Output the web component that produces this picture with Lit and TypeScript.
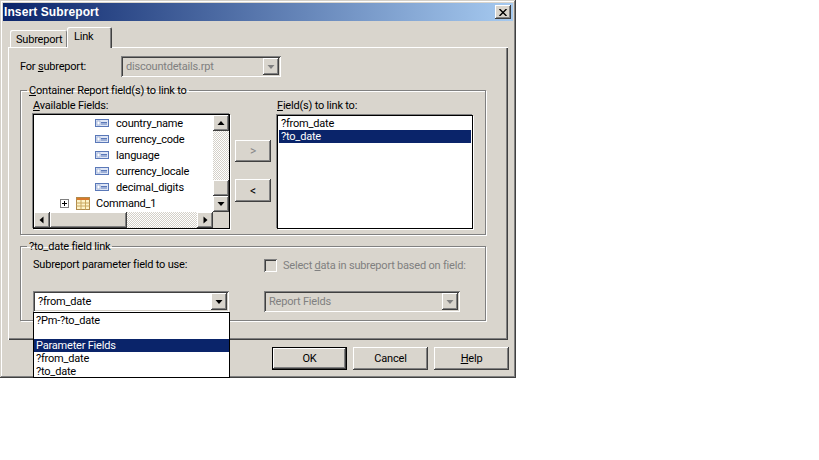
import { LitElement, html, css, svg } from "lit";
import { customElement } from "lit/decorators.js";

const fieldIcon = html`<svg class="ficon" width="14" height="8" viewBox="0 0 14 8"><rect x="0.5" y="0.5" width="13" height="7" fill="#dfe6f5" stroke="#5a78b8"/><rect x="2" y="2" width="3" height="4" fill="#fff" stroke="#7f96c8" stroke-width="0.6"/><path d="M6 3.5H12M6 5H12" stroke="#5a78b8"/></svg>`;
const tableIcon = html`<svg class="ticon" width="14" height="13" viewBox="0 0 14 13"><rect x="0.5" y="0.5" width="13" height="12" fill="#fdf3c8" stroke="#b08a4a"/><rect x="1" y="1" width="12" height="2" fill="#d9792b"/><path d="M0.5 6H13.5M0.5 9H13.5M5 3V12.5M9.5 3V12.5" stroke="#c9a860"/></svg>`;
const plusBox = html`<svg class="plus" width="9" height="9" viewBox="0 0 9 9"><rect x="0.5" y="0.5" width="8" height="8" fill="#fff" stroke="#808080"/><path d="M2 4.5H7M4.5 2V7" stroke="#000"/></svg>`;
const arrow = (d: string, color = "#000") => html`<svg width="8" height="8" viewBox="0 0 8 8">${svg`<path d=${d} fill=${color}/>`}</svg>`;
const DOWN = "M0.5 2H7.5L4 6Z";
const UP = "M0.5 6H7.5L4 2Z";
const LEFT = "M5.5 0.5V7.5L1.5 4Z";
const RIGHT = "M2.5 0.5V7.5L6.5 4Z";

@customElement("app-root")
export class AppRoot extends LitElement {
  static styles = css`
    :host { display: block; width: 819px; height: 460px; background: #fff; overflow: hidden;
      font: 11px Roboto, "Liberation Sans", Arial, sans-serif; letter-spacing: -0.2px; color: #000; white-space: nowrap; }
    .win { box-sizing: border-box; width: 516px; height: 378px; background: #d9d5cd; padding: 3px;
      box-shadow: inset -1px -1px #404040, inset 1px 1px #d4d0c8, inset -2px -2px #808080, inset 2px 2px #fff; }
    .title { height: 18px; display: flex; align-items: center; justify-content: space-between;
      background: linear-gradient(90deg, #0a246a, #a6caf0); color: #fff; font: bold 12px "Liberation Sans", Arial, sans-serif; letter-spacing: .1px;
      padding: 0 2px 0 1px; }
    .close { box-sizing: border-box; width: 16px; height: 14px; background: #d9d5cd; display: flex; align-items: center; justify-content: center;
      box-shadow: inset -1px -1px #404040, inset 1px 1px #fff, inset -2px -2px #808080; }
    .tabs { display: flex; align-items: flex-end; height: 26px; padding-left: 7px; }
    .tab { box-sizing: border-box; height: 17px; padding: 3px 0 0 6px; width: 57px; border-radius: 2px 2px 0 0;
      box-shadow: inset 1px 1px #fff, inset -1px 0 #808080; }
    .tab.on { width: 45px; padding: 3px 0 0 7px; position: relative; z-index: 1; background: #d9d5cd;
      box-shadow: inset 1px 1px #fff, inset -1px 0 #404040, inset -2px 0 #808080; margin-bottom: -1px; height: 21px; }
    .panel { box-sizing: border-box; margin-left: 5px; width: 500px; height: 293px; padding: 9px 0 0 12px;
      box-shadow: inset 1px 1px #fff, inset -1px -1px #404040, inset -2px -2px #808080; }
    .for { display: flex; align-items: center; height: 21px; }
    .for label { width: 101px; }
    u { text-decoration: underline; }
    .combo { box-sizing: border-box; height: 21px; position: relative; display: flex; align-items: center; padding: 0 2px 0 5px; justify-content: space-between;
      background: #fff; box-shadow: inset 1px 1px #808080, inset -1px -1px #fff, inset 2px 2px #404040, inset -2px -2px #d4d0c8; }
    .combo.off { background: #d9d5cd; color: #808080; }
    .w160 { width: 160px; }
    .drop { box-sizing: border-box; width: 16px; height: 17px; background: #d9d5cd; display: flex; align-items: center; justify-content: center;
      box-shadow: inset -1px -1px #404040, inset 1px 1px #fff, inset -2px -2px #808080; }
    fieldset { box-sizing: border-box; margin: 0; width: 466px; min-width: 0; border: 1px solid #808080; box-shadow: 1px 1px #fff, inset 1px 1px #fff; padding: 0 0 0 12px; }
    legend { padding: 0 2px; margin-left: -6px; line-height: 13px; height: 13px; }
    .g1 { margin-top: 7px; height: 151px; }
    .g2 { margin-top: 5px; height: 81px; }
    .cols { display: grid; grid-template-columns: 197px 36px 197px; column-gap: 5px; }
    .cols > :nth-child(3) { margin-left: 1px; }
    .lab { display: block; height: 14px; line-height: 12px; padding-top: 3px; }
    .list { box-sizing: border-box; height: 115px; background: #fff; padding: 1px; position: relative;
      box-shadow: inset 0 0 0 1px #000, -1px -1px #808080, 1px 1px #fff; }
    .tree { position: absolute; left: 1px; top: 1px; right: 1px; bottom: 1px; display: grid; grid-template-columns: 1fr 16px; grid-template-rows: 1fr 16px; }
    .rows { overflow: hidden; }
    .row { height: 16px; display: flex; align-items: center; padding-left: 61px; gap: 7px; }
    .row.cmd { padding-left: 26px; gap: 7px; }
    .row.cmd .ticon { margin-left: 0; margin-right: -1px; }
    .vs { display: flex; flex-direction: column; }
    .hs { display: flex; }
    .btn { box-sizing: border-box; background: #d9d5cd; display: flex; align-items: center; justify-content: center;
      box-shadow: inset -1px -1px #404040, inset 1px 1px #fff, inset -2px -2px #808080; }
    .sq { width: 16px; height: 16px; flex: none; }
    .track { flex: 1; background: repeating-conic-gradient(#fff 0 25%, #d4d0c8 0 50%) 0 0 / 2px 2px; }
    .hthumb { width: 77px; flex: none; }
    .corner { background: #d9d5cd; }
    .mid { display: flex; flex-direction: column; padding-top: 43px; gap: 17px; }
    .mid .btn { height: 23px; font-size: 12px; }
    .mid .btn.off { color: #888; height: 22px; }
    .plain { margin-top: 1px; height: 114px; padding: 2px; }
    .item { height: 13px; line-height: 13px; padding-left: 2px; }
    .sel { background: #0a246a; color: #fff; }
    .two { display: grid; grid-template-columns: 196px 196px; column-gap: 35px; }
    .two .lab { padding-top: 6px; height: 12px; }
    .chk { display: flex; align-items: center; gap: 6px; color: #808080; height: 15px; margin-top: 5px; }
    .box { box-sizing: border-box; width: 13px; height: 13px; flex: none;
      box-shadow: inset 1px 1px #808080, inset -1px -1px #fff, inset 2px 2px #404040; }
    .spc { height: 18px; }
    .menu { position: absolute; left: 0; top: 21px; width: 197px; height: 66px; box-sizing: border-box; background: #fff; border: 1px solid #000; color: #000; z-index: 2; }
    .menu div { height: 13px; line-height: 13px; padding-left: 2px; }
    .menu .pm { height: 14px; padding-top: 1px; line-height: 14px; }
    .menu .blank { height: 11px; }
    .foot { display: flex; gap: 6px; padding: 7px 0 0 269px; }
    .foot .btn { width: 75px; height: 23px; }
    .foot .def { box-shadow: 0 0 0 1px #000, inset -1px -1px #404040, inset 1px 1px #fff, inset -2px -2px #808080; width: 73px; height: 21px; margin: 1px; }
  `;

  render() {
    const fields = ["country_name", "currency_code", "language", "currency_locale", "decimal_digits"];
    return html`<div class="win">
      <div class="title"><span>Insert Subreport</span>
        <span class="close"><svg width="8" height="7" viewBox="0 0 8 7"><path d="M0.5 0L7.5 7M7.5 0L0.5 7" stroke="#000" stroke-width="1.4"/></svg></span></div>
      <div class="tabs"><div class="tab">Subreport</div><div class="tab on">Link</div></div>
      <div class="panel">
        <div class="for"><label>For <u>s</u>ubreport:</label>
          <div class="combo off w160"><span>discountdetails.rpt</span><span class="drop">${arrow(DOWN, "#808080")}</span></div></div>
        <fieldset class="g1"><legend><u>C</u>ontainer Report field(s) to link to</legend>
          <div class="cols">
            <div><span class="lab"><u>A</u>vailable Fields:</span>
              <div class="list"><div class="tree">
                <div class="rows">
                  ${fields.map((f) => html`<div class="row">${fieldIcon}<span>${f}</span></div>`)}
                  <div class="row cmd">${plusBox}${tableIcon}<span>Command_1</span></div>
                </div>
                <div class="vs"><div class="btn sq">${arrow(UP)}</div><div class="track"></div><div class="btn sq"></div><div class="btn sq">${arrow(DOWN)}</div></div>
                <div class="hs"><div class="btn sq">${arrow(LEFT)}</div><div class="btn hthumb"></div><div class="track"></div><div class="btn sq">${arrow(RIGHT)}</div></div>
                <div class="corner"></div>
              </div></div></div>
            <div class="mid"><div class="btn off">&gt;</div><div class="btn">&lt;</div></div>
            <div><span class="lab"><u>F</u>ield(s) to link to:</span>
              <div class="list plain"><div class="item">?from_date</div><div class="item sel">?to_date</div></div></div>
          </div>
        </fieldset>
        <fieldset class="g2"><legend>?to_date field link</legend>
          <div class="two">
            <div><span class="lab">Subreport parameter field to use:</span></div>
            <div class="chk"><span class="box"></span><span>Select <u>d</u>ata in subreport based on field:</span></div>
          </div>
          <div class="spc"></div>
          <div class="two">
            <div class="combo"><span>?from_date</span><span class="drop">${arrow(DOWN)}</span>
              <div class="menu"><div class="pm">?Pm-?to_date</div><div class="blank"></div><div class="sel">Parameter Fields</div><div>?from_date</div><div>?to_date</div></div></div>
            <div class="combo off"><span>Report Fields</span><span class="drop">${arrow(DOWN, "#808080")}</span></div>
          </div>
        </fieldset>
      </div>
      <div class="foot"><div class="btn def">OK</div><div class="btn">Cancel</div><div class="btn"><span><u>H</u>elp</span></div></div>
    </div>`;
  }
}
